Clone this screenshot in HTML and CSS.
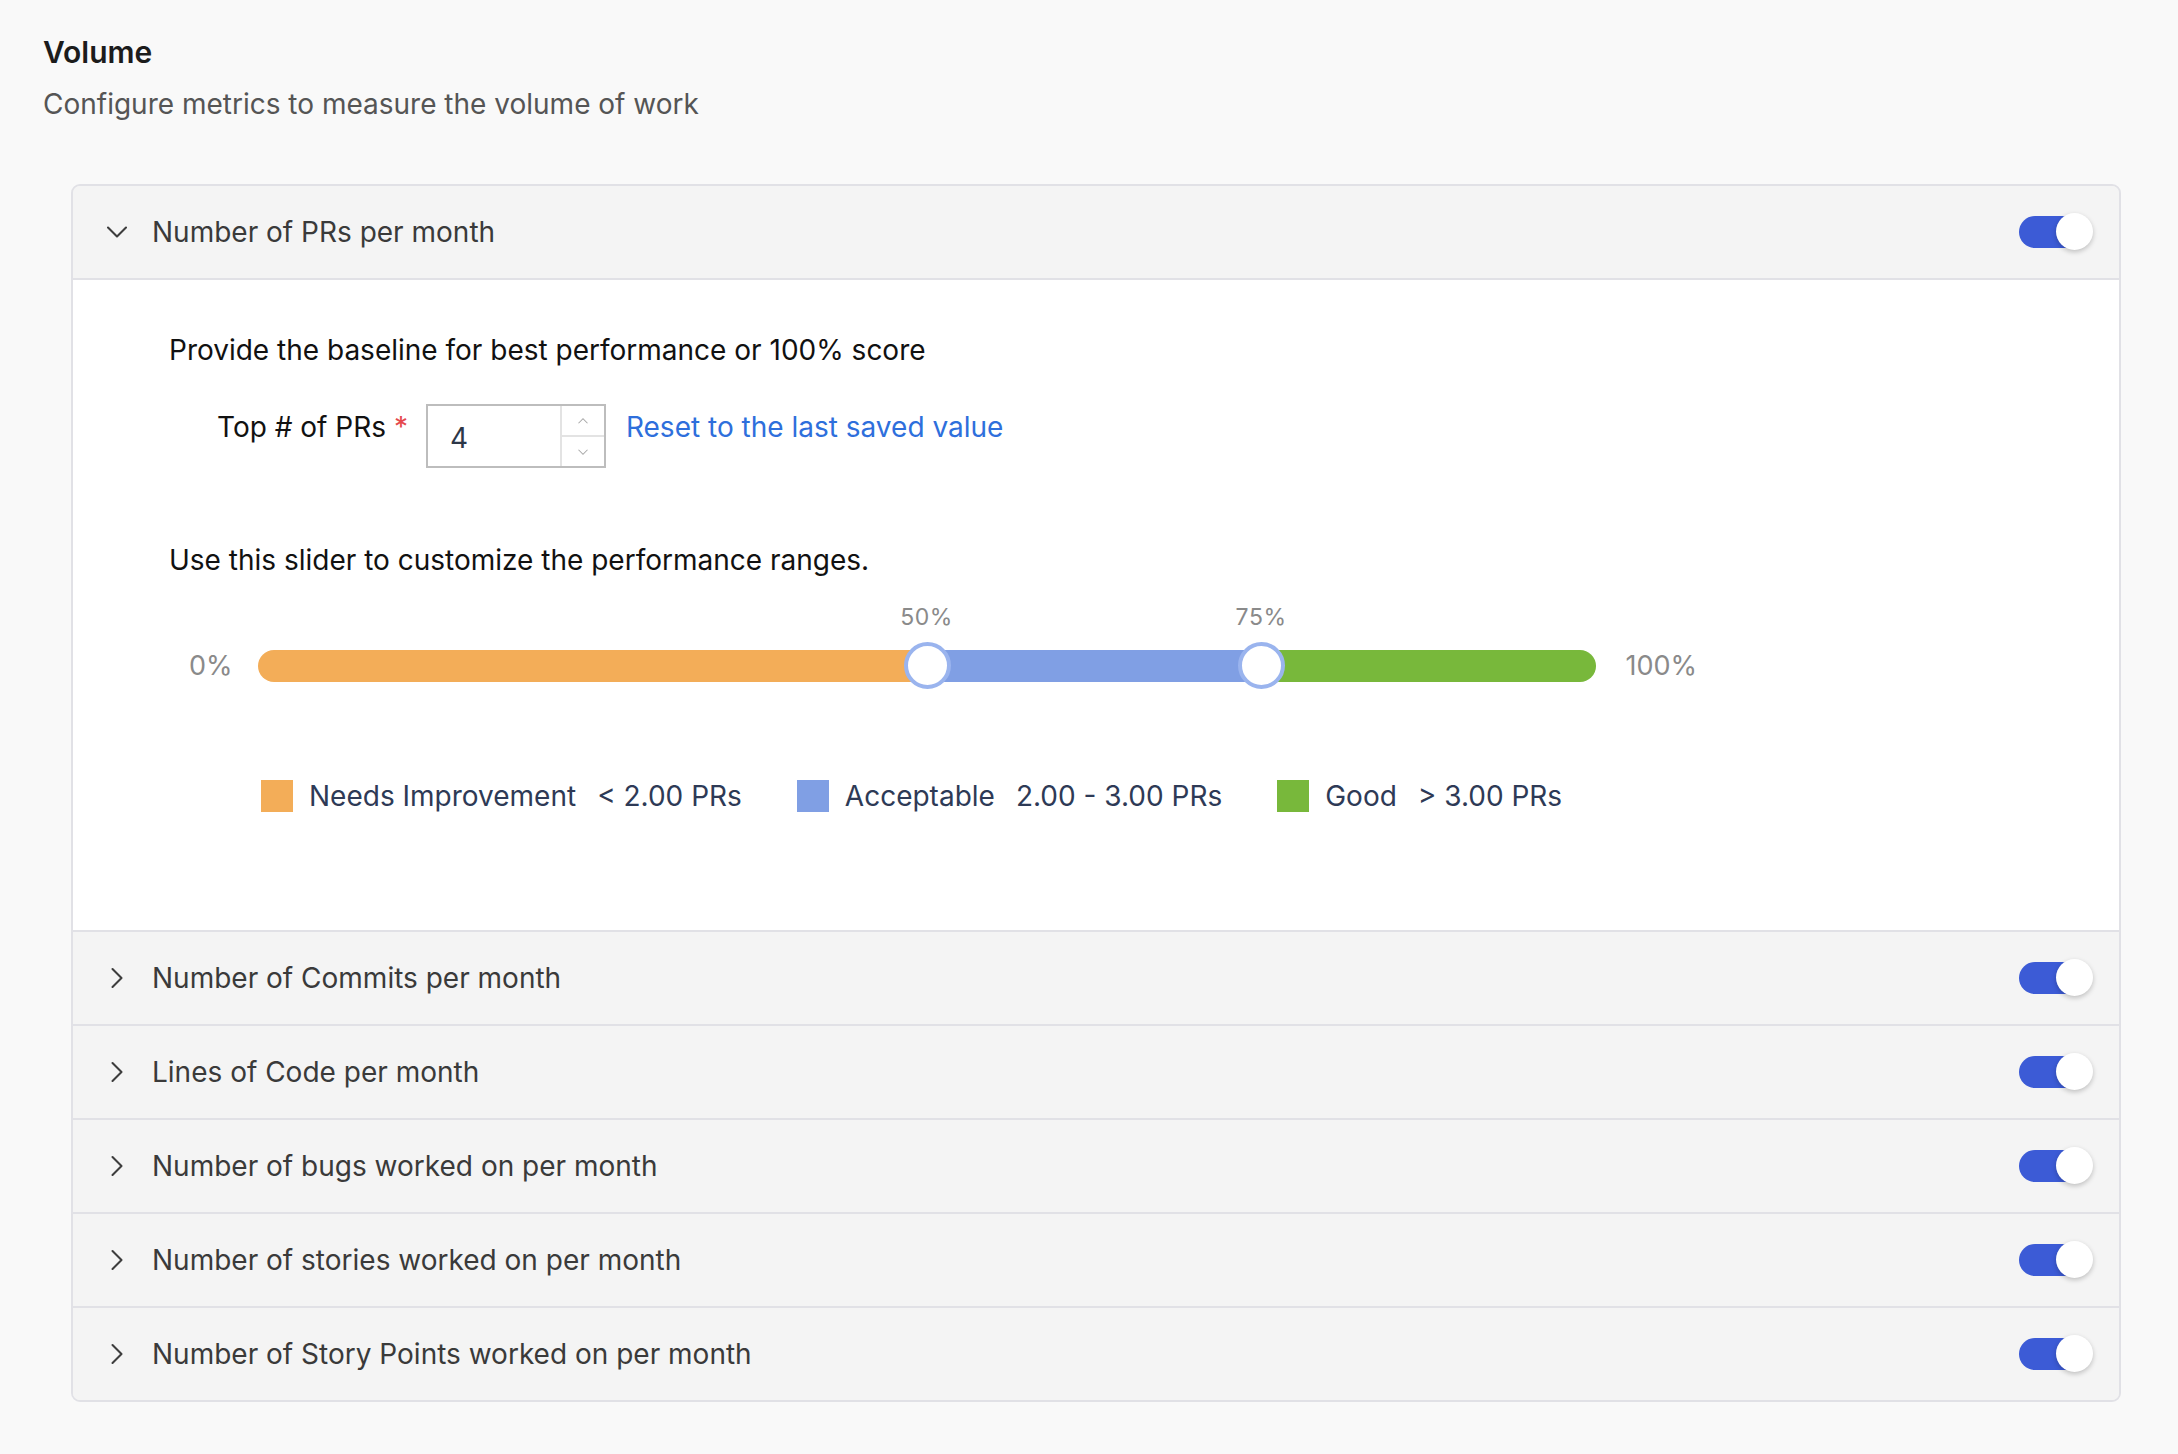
FILE: index.html
```html
<!DOCTYPE html>
<html lang="en">
<head>
<meta charset="utf-8">
<title>Volume</title>
<link rel="stylesheet" href="styles.css">
</head>
<body>
<div class="page">
  <h1 class="title">Volume</h1>
  <p class="subtitle">Configure metrics to measure the volume of work</p>

  <div class="card">
    <div class="item open">
      <div class="item-header">
        <svg class="chev" viewBox="0 0 24 24"><path d="M6 9l6 6 6-6"/></svg>
        <span class="item-title">Number of PRs per month</span>
        <span class="toggle"><span class="knob"></span></span>
      </div>
      <div class="item-body">
        <p class="lead">Provide the baseline for best performance or 100% score</p>
        <div class="field-row">
          <span class="field-label">Top # of PRs <span class="req">*</span></span>
          <div class="num-input">
            <span class="num-value">4</span>
            <span class="num-spin">
              <span class="spin-btn"><svg viewBox="0 0 24 24"><path d="M6 15l6-6 6 6"/></svg></span>
              <span class="spin-btn"><svg viewBox="0 0 24 24"><path d="M6 9l6 6 6-6"/></svg></span>
            </span>
          </div>
          <a class="reset-link" href="#">Reset to the last saved value</a>
        </div>
        <p class="lead lead-slider">Use this slider to customize the performance ranges.</p>
        <div class="slider-row">
          <span class="edge-label">0%</span>
          <div class="track">
            <span class="seg seg-orange" style="width:50%"></span>
            <span class="seg seg-blue" style="width:25%"></span>
            <span class="seg seg-green" style="width:25%"></span>
            <span class="mark-label" style="left:50%">50%</span>
            <span class="mark-label" style="left:75%">75%</span>
            <span class="handle" style="left:50%"></span>
            <span class="handle" style="left:75%"></span>
          </div>
          <span class="edge-label">100%</span>
        </div>
        <div class="legend">
          <span class="legend-item"><span class="sw sw-orange"></span><span class="lg-name">Needs Improvement</span><span class="lg-range">&lt; 2.00 PRs</span></span>
          <span class="legend-item"><span class="sw sw-blue"></span><span class="lg-name">Acceptable</span><span class="lg-range">2.00 - 3.00 PRs</span></span>
          <span class="legend-item"><span class="sw sw-green"></span><span class="lg-name">Good</span><span class="lg-range">&gt; 3.00 PRs</span></span>
        </div>
      </div>
    </div>

    <div class="item">
      <div class="item-header">
        <svg class="chev" viewBox="0 0 24 24"><path d="M9 6l6 6-6 6"/></svg>
        <span class="item-title">Number of Commits per month</span>
        <span class="toggle"><span class="knob"></span></span>
      </div>
    </div>
    <div class="item">
      <div class="item-header">
        <svg class="chev" viewBox="0 0 24 24"><path d="M9 6l6 6-6 6"/></svg>
        <span class="item-title">Lines of Code per month</span>
        <span class="toggle"><span class="knob"></span></span>
      </div>
    </div>
    <div class="item">
      <div class="item-header">
        <svg class="chev" viewBox="0 0 24 24"><path d="M9 6l6 6-6 6"/></svg>
        <span class="item-title">Number of bugs worked on per month</span>
        <span class="toggle"><span class="knob"></span></span>
      </div>
    </div>
    <div class="item">
      <div class="item-header">
        <svg class="chev" viewBox="0 0 24 24"><path d="M9 6l6 6-6 6"/></svg>
        <span class="item-title">Number of stories worked on per month</span>
        <span class="toggle"><span class="knob"></span></span>
      </div>
    </div>
    <div class="item">
      <div class="item-header">
        <svg class="chev" viewBox="0 0 24 24"><path d="M9 6l6 6-6 6"/></svg>
        <span class="item-title">Number of Story Points worked on per month</span>
        <span class="toggle"><span class="knob"></span></span>
      </div>
    </div>
  </div>
</div>
</body>
</html>
```

FILE: styles.css
```css
* { box-sizing: border-box; }

html, body {
  margin: 0;
  padding: 0;
  background: #f9f9f9;
}

body {
  font-family: Inter, "Noto Sans", "Liberation Sans", sans-serif;
  color: #1f1f1f;
}

.page {
  padding: 32px 57px 40px 43px;
}

.title {
  margin: 0;
  font-size: 30px;
  line-height: 40px;
  font-weight: 600;
  color: #1c1c1c;
}

.subtitle {
  margin: 12px 0 0;
  font-size: 28px;
  line-height: 40px;
  color: #555555;
}

.card {
  margin: 60px 0 0 28px;
  border: 2px solid #e1e1e6;
  border-radius: 9px;
  overflow: hidden;
  background: #f4f4f4;
}

.item + .item {
  border-top: 2px solid #e1e1e6;
}

.item-header {
  height: 92px;
  display: flex;
  align-items: center;
  padding: 0 26px 0 26px;
  background: #f4f4f4;
}

.open .item-header {
  border-bottom: 2px solid #e1e1e6;
  height: 94px;
}

.chev {
  width: 36px;
  height: 36px;
  flex: none;
  fill: none;
  stroke: #3d3d3d;
  stroke-width: 1.4;
  stroke-linecap: round;
  stroke-linejoin: round;
}

.item-title {
  margin-left: 17px;
  flex: 1;
  font-size: 28px;
  line-height: 40px;
  color: #3a3a3a;
}

.toggle {
  position: relative;
  width: 74px;
  height: 32px;
  flex: none;
}

.toggle::before {
  content: "";
  position: absolute;
  left: 0;
  top: 0;
  width: 72px;
  height: 32px;
  border-radius: 16px;
  background: #3c5bd6;
}

.knob {
  position: absolute;
  right: 0;
  top: -3px;
  width: 37px;
  height: 37px;
  border-radius: 50%;
  background: #ffffff;
  box-shadow: 0 2px 5px rgba(0, 0, 0, 0.22);
}

.item-body {
  background: #ffffff;
  padding: 50px 0 114px 96px;
}

.lead {
  margin: 0;
  font-size: 28px;
  line-height: 40px;
  color: #111111;
}

.field-row {
  display: flex;
  align-items: flex-start;
  margin: 34px 0 0 48px;
  height: 64px;
}

.field-label {
  margin-top: 3px;
  font-size: 28px;
  line-height: 40px;
  color: #111111;
}

.req {
  color: #e5484d;
}

.num-input {
  margin-left: 18px;
  width: 180px;
  height: 64px;
  display: flex;
  border: 2px solid #bdbdbd;
  background: #ffffff;
}

.num-value {
  flex: 1;
  padding: 6px 0 0 22px;
  font-size: 28px;
  line-height: 52px;
  color: #2d3748;
}

.num-spin {
  width: 44px;
  display: flex;
  flex-direction: column;
  border-left: 2px solid #e3e3e3;
}

.spin-btn {
  flex: 1;
  display: flex;
  align-items: center;
  justify-content: center;
}

.spin-btn + .spin-btn {
  border-top: 2px solid #e3e3e3;
}

.spin-btn svg {
  width: 18px;
  height: 18px;
  fill: none;
  stroke: #a8a8a8;
  stroke-width: 1.4;
}

.reset-link {
  margin: 3px 0 0 20px;
  font-size: 28px;
  line-height: 40px;
  color: #2e6fdc;
  text-decoration: none;
}

.lead-slider {
  margin-top: 72px;
}

.slider-row {
  display: flex;
  align-items: center;
  height: 48px;
  margin: 62px 0 0 20px;
}

.edge-label {
  font-size: 27px;
  line-height: 40px;
  color: #8a8a8a;
}

.track {
  position: relative;
  display: flex;
  width: 1338px;
  height: 32px;
  margin: 0 30px 0 25px;
  border-radius: 16px;
  overflow: visible;
}

.seg {
  height: 32px;
}

.seg-orange {
  background: #f3ad58;
  border-radius: 16px 0 0 16px;
}

.seg-blue {
  background: #809fe4;
}

.seg-green {
  background: #78b83b;
  border-radius: 0 16px 16px 0;
}

.mark-label {
  position: absolute;
  top: -48px;
  transform: translateX(-50%);
  font-size: 23px;
  line-height: 30px;
  color: #8a8a8a;
  letter-spacing: 0.5px;
}

.handle {
  position: absolute;
  top: -8px;
  width: 47px;
  height: 47px;
  margin-left: -23px;
  border-radius: 50%;
  background: #ffffff;
  border: 4px solid #9ab4ee;
}

.legend {
  display: flex;
  align-items: center;
  margin: 86px 0 0 92px;
  height: 40px;
}

.legend-item {
  display: flex;
  align-items: center;
  margin-right: 55px;
}

.sw {
  width: 32px;
  height: 32px;
  margin-right: 16px;
}

.sw-orange { background: #f3ad58; }
.sw-blue { background: #809fe4; }
.sw-green { background: #78b83b; }

.lg-name,
.lg-range {
  font-size: 28px;
  line-height: 40px;
  color: #2e3a56;
}

.lg-range {
  margin-left: 21px;
}
```
